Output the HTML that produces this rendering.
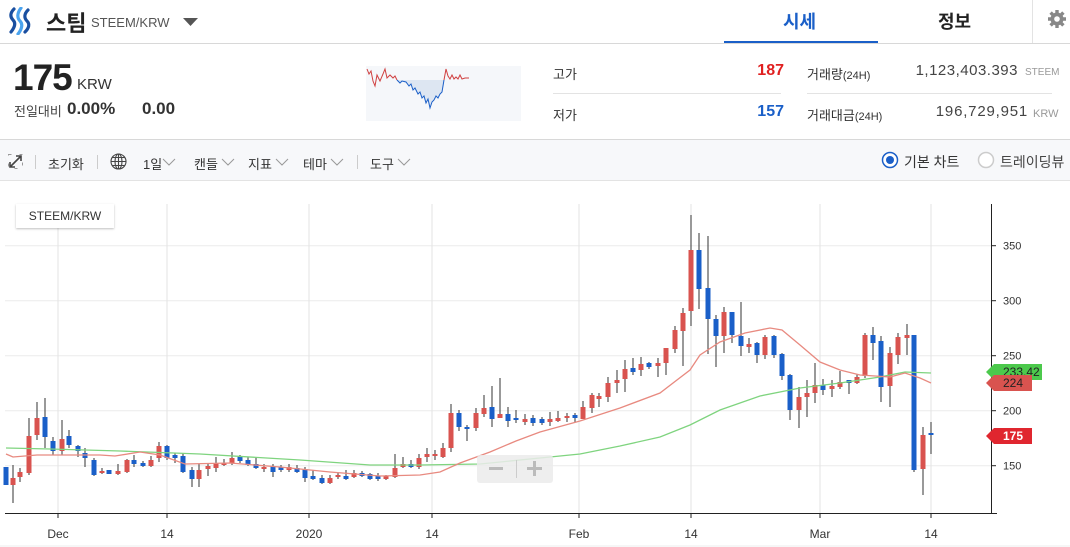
<!DOCTYPE html>
<html><head><meta charset="utf-8">
<style>
*{margin:0;padding:0;box-sizing:border-box}
body{width:1070px;height:547px;overflow:hidden;background:#fff;font-family:"Liberation Sans","Noto Sans CJK KR",sans-serif;color:#222;position:relative}
.a{position:absolute;white-space:nowrap}
</style></head><body>
<!-- header -->
<svg class="a" style="left:8px;top:7px" width="26" height="28" viewBox="0 0 26 28">
<path d="M6 2 C2 6,2 10,5 13 C8 16,7 20,3 25" stroke="#1a4fa0" stroke-width="3.2" fill="none" stroke-linecap="round"/>
<path d="M13 1 C9 6,9 11,12 14 C15 17,14 22,10 27" stroke="#4aa3ee" stroke-width="3.2" fill="none" stroke-linecap="round"/>
<path d="M20 3 C16 7,16 11,19 14 C22 17,21 21,17 25" stroke="#1a4fa0" stroke-width="3.2" fill="none" stroke-linecap="round"/>
</svg>
<div class="a" style="left:46px;top:6px;font-size:22px;font-weight:bold;color:#222">스팀</div>
<div class="a" style="left:91px;top:15px;font-size:13px;color:#555">STEEM/KRW</div>
<svg class="a" style="left:183px;top:18px" width="15" height="9"><path d="M0 0H15L7.5 8Z" fill="#555"/></svg>
<div class="a" style="left:783px;top:8px;font-size:18px;font-weight:bold;color:#1a5fc8">시세</div>
<div class="a" style="left:724px;top:41px;width:154px;height:3px;background:#1a5fc8"></div>
<div class="a" style="left:938px;top:8px;font-size:18px;font-weight:bold;color:#222">정보</div>
<div class="a" style="left:1032px;top:0;width:1px;height:43px;background:#e3e3e3"></div>
<svg class="a" style="left:1047px;top:9px" width="20" height="20" viewBox="0 0 20 20"><g fill="#888"><circle cx="10" cy="10" r="6.5"/><g stroke="#888" stroke-width="3.4"><path d="M10 1v18M1 10h18M3.6 3.6l12.8 12.8M16.4 3.6L3.6 16.4"/></g></g><circle cx="10" cy="10" r="2.8" fill="#fff"/></svg>
<div class="a" style="left:0;top:43px;width:1070px;height:1px;background:#d8d8d8"></div>
<!-- info -->
<div class="a" style="left:13px;top:57px;font-size:37px;color:#222;letter-spacing:-1px;font-weight:bold">175</div>
<div class="a" style="left:77px;top:76px;font-size:15px;color:#333">KRW</div>
<div class="a" style="left:14px;top:101px;font-size:13px;color:#444">전일대비</div>
<div class="a" style="left:67px;top:99px;font-size:17px;font-weight:bold;color:#333">0.00%</div>
<div class="a" style="left:142px;top:99px;font-size:17px;font-weight:bold;color:#333">0.00</div>
<svg class="a" style="left:366px;top:66px" width="155" height="55">
<rect width="155" height="55" fill="#f5f7fa"/>
<path d="M31 14L34 17L36 15L40 16L43 20L45 18L47 24L49 22L52 28L54 26L56 32L58 30L60 37L62 33L64 42L66 36L68 34L70 30L72 32L74 28L76 26L78 14Z" fill="#dde6f2"/>
<path d="M1 3L3 8L5 5L7 15L9 20L11 9L14 15L17 8L19 3L21 12L24 9L27 12L29 10L31 14" stroke="#d04040" stroke-width="1" fill="none"/>
<path d="M31 14L34 17L36 15L40 16L43 20L45 18L47 24L49 22L52 28L54 26L56 32L58 30L60 37L62 33L64 42L66 36L68 34L70 30L72 32L74 28L76 26L78 14" stroke="#1a5fc8" stroke-width="1" fill="none"/>
<path d="M78 14L80 3L82 10L84 13L86 9L88 13L90 11L92 13L94 9L96 13L99 12L103 12" stroke="#d04040" stroke-width="1" fill="none"/>
</svg>
<div class="a" style="left:553px;top:64px;font-size:13px;color:#333">고가</div>
<div class="a" style="left:740px;top:62px;width:44px;text-align:right;font-size:16px;font-weight:bold;color:#e02020">187</div>
<div class="a" style="left:553px;top:93px;width:228px;height:1px;background:#e3e3e3"></div>
<div class="a" style="left:553px;top:105px;font-size:13px;color:#333">저가</div>
<div class="a" style="left:740px;top:103px;width:44px;text-align:right;font-size:16px;font-weight:bold;color:#1a5fc8">157</div>
<div class="a" style="left:807px;top:64px;font-size:13px;color:#333">거래량<span style="font-size:11px">(24H)</span></div>
<div class="a" style="left:880px;top:62px;width:138px;text-align:right;font-size:15px;color:#444;letter-spacing:0.5px">1,123,403.393</div>
<div class="a" style="left:1025px;top:67px;font-size:10px;color:#999">STEEM</div>
<div class="a" style="left:807px;top:93px;width:245px;height:1px;background:#e3e3e3"></div>
<div class="a" style="left:807px;top:105px;font-size:13px;color:#333">거래대금<span style="font-size:11px">(24H)</span></div>
<div class="a" style="left:880px;top:103px;width:148px;text-align:right;font-size:15px;color:#444;letter-spacing:0.8px">196,729,951</div>
<div class="a" style="left:1033px;top:108px;font-size:11px;color:#999">KRW</div>
<div class="a" style="left:0;top:139px;width:1070px;height:1px;background:#d8d8d8"></div>
<!-- toolbar -->
<div class="a" style="left:0;top:140px;width:1070px;height:41px;background:#f7f8fa;border-bottom:1px solid #e3e3e3"></div>
<svg class="a" style="left:8px;top:154px" width="15" height="15" viewBox="0 0 15 15"><rect x=".5" y=".5" width="14" height="14" fill="none" stroke="#999" stroke-dasharray="3 8"/><path d="M2 13L13 2M8 2h5v5M2 8v5h5" stroke="#444" stroke-width="1.6" fill="none"/></svg>
<div class="a" style="left:35px;top:155px;width:1px;height:14px;background:#ccc"></div>
<div class="a" style="left:48px;top:154px;font-size:13px;color:#333">초기화</div>
<div class="a" style="left:97px;top:155px;width:1px;height:14px;background:#ccc"></div>
<svg class="a" style="left:110px;top:153px" width="17" height="17" viewBox="0 0 17 17"><g fill="none" stroke="#444" stroke-width="1.1"><circle cx="8.5" cy="8.5" r="7.5"/><ellipse cx="8.5" cy="8.5" rx="3.5" ry="7.5"/><path d="M1 8.5h15M2.5 4.5h12M2.5 12.5h12M8.5 1v15"/></g></svg>
<div class="a" style="left:143px;top:154px;font-size:13px;color:#333">1일</div>
<div class="a" style="left:194px;top:154px;font-size:13px;color:#333">캔들</div>
<div class="a" style="left:248px;top:154px;font-size:13px;color:#333">지표</div>
<div class="a" style="left:303px;top:154px;font-size:13px;color:#333">테마</div>
<div class="a" style="left:357px;top:155px;width:1px;height:14px;background:#ccc"></div>
<div class="a" style="left:370px;top:154px;font-size:13px;color:#333">도구</div>
<svg class="a" style="left:0;top:158px" width="420" height="10"><g fill="none" stroke="#999" stroke-width="1"><path d="M163 1l6 6 6-6M222 1l6 6 6-6M276 1l6 6 6-6M331 1l6 6 6-6M398 1l6 6 6-6"/></g></svg>
<svg class="a" style="left:881px;top:151px" width="18" height="18"><circle cx="9" cy="9" r="7.5" fill="#fff" stroke="#1a5fc8" stroke-width="1.5"/><circle cx="9" cy="9" r="4" fill="#1a5fc8"/></svg>
<div class="a" style="left:904px;top:152px;font-size:14px;color:#333">기본 차트</div>
<svg class="a" style="left:977px;top:151px" width="18" height="18"><circle cx="9" cy="9" r="7.5" fill="#fff" stroke="#ccc" stroke-width="1.5"/></svg>
<div class="a" style="left:1000px;top:152px;font-size:14px;color:#444">트레이딩뷰</div>
<!-- chart -->
<svg id="ch" class="a" style="left:0;top:0" width="1070" height="547"></svg>
<div class="a" style="left:16px;top:204px;width:98px;height:24px;background:#fff;box-shadow:0 1px 2px rgba(0,0,0,.25);font-size:12px;color:#333;text-align:center;line-height:24px">STEEM/KRW</div>
<div class="a" style="left:477px;top:455px;width:76px;height:28px;background:rgba(235,235,235,.85);border-radius:3px"></div>
<div class="a" style="left:489px;top:467px;width:14px;height:3px;background:#bbb"></div>
<div class="a" style="left:516px;top:460px;width:1px;height:18px;background:#ccc"></div>
<div class="a" style="left:527px;top:467px;width:15px;height:3px;background:#bbb"></div>
<div class="a" style="left:533px;top:461px;width:3px;height:15px;background:#bbb"></div>
<script>
var s='';
function L(x1,y1,x2,y2,c,w){s+='<line x1="'+x1+'" y1="'+y1+'" x2="'+x2+'" y2="'+y2+'" stroke="'+c+'" stroke-width="'+(w||1)+'"/>';}
[245.7,300.7,355.7,410.7,465.7].forEach(function(y){L(5,y,991,y,'#ebebeb');});
[58,167,309,432,579,691,820,931].forEach(function(x){L(x,204,x,513,'#e3e3e3');});
L(5,513.5,997,513.5,'#222');L(991.5,204,991.5,513,'#222');
[['350',245.7],['300',300.7],['250',355.7],['200',410.7],['150',465.7]].forEach(function(t){L(991,t[1],996,t[1],'#222');s+='<text x="1003" y="'+(t[1]+4)+'" font-size="11" fill="#333" font-family="Liberation Sans">'+t[0]+'</text>';});
[['Dec',58],['14',167],['2020',309],['14',432],['Feb',579],['14',691],['Mar',820],['14',931]].forEach(function(t){L(t[1],513,t[1],518,'#222');s+='<text x="'+t[1]+'" y="538" font-size="12" fill="#333" text-anchor="middle" font-family="Liberation Sans">'+t[0]+'</text>';});
L(0,546,1070,546,'#eee');
var R='#d9534f',B='#1a5fc8';
var c=[[6,467,485,467,485,B],[13,478,485,465,503,R],[20,472,477,468,482,R],[29,436,473,418,475,R],[37,418,435,402,440,R],[45,417,437,398,448,B],[53,441,451,437,455,B],[62,439,451,420,455,R],[69,436,445,430,448,B],[78,446,451,445,457,B],[85,453,458,448,467,B],[94,460,475,458,476,B],[102,471,472,468,474,R],[109,470,474,470,474,B],[118,471,474,464,475,R],[127,460,472,459,473,R],[134,460,464,455,467,B],[143,463,466,461,467,B],[151,460,466,456,467,R],[159,446,458,442,462,R],[167,446,458,445,460,B],[175,455,458,453,463,B],[183,456,472,453,473,B],[192,470,479,467,487,B],[199,470,479,464,487,R],[208,466,469,463,476,R],[216,463,468,457,472,R],[224,463,465,459,466,R],[232,458,463,452,465,R],[240,457,461,455,463,B],[248,460,465,457,466,B],[256,464,468,457,469,B],[264,467,469,464,472,R],[273,466,472,464,477,B],[281,467,470,465,472,B],[289,467,470,464,472,R],[297,468,472,465,473,B],[305,469,478,467,482,B],[313,476,479,470,480,B],[322,478,483,475,484,B],[330,478,483,475,484,R],[338,475,477,473,479,R],[346,476,479,470,480,B],[354,473,477,470,478,R],[362,473,476,471,477,B],[370,474,479,473,480,B],[378,476,479,473,481,B],[386,476,479,475,480,R],[395,468,477,454,478,R],[403,464,467,457,468,R],[411,464,467,460,468,B],[419,458,467,454,469,R],[427,454,457,448,462,R],[435,454,456,450,460,R],[443,448,457,443,458,R],[451,413,448,404,452,R],[459,413,427,410,431,B],[467,427,429,425,441,B],[476,413,428,408,431,R],[484,408,414,395,417,R],[492,407,419,386,427,B],[500,414,418,378,418,R],[508,414,421,407,427,B],[516,418,420,410,423,B],[525,419,422,414,425,R],[533,418,423,415,426,B],[542,419,423,417,425,B],[550,419,422,412,426,R],[558,418,421,411,422,R],[567,416,418,413,422,R],[575,415,418,413,422,B],[583,407,419,401,419,R],[592,395,408,393,413,R],[599,396,399,393,407,R],[608,383,397,377,402,R],[617,380,383,370,393,R],[625,369,379,360,392,R],[633,368,372,358,375,B],[641,364,370,357,376,R],[649,363,367,362,369,B],[658,363,366,358,377,R],[666,348,363,348,375,R],[675,330,349,326,353,R],[683,313,331,308,366,R],[691,250,311,215,326,R],[699,250,289,233,309,B],[708,288,319,236,354,B],[716,319,336,315,367,B],[724,312,336,307,353,R],[732,312,335,312,343,B],[741,336,346,302,356,B],[749,344,347,338,353,R],[757,343,355,342,363,B],[765,337,355,335,359,R],[774,336,355,335,358,B],[782,354,376,353,380,B],[790,375,410,374,420,B],[799,397,410,387,428,R],[807,393,397,380,417,R],[815,385,393,363,403,R],[823,385,390,379,395,B],[832,386,389,380,397,R],[840,382,387,371,389,R],[849,380,383,380,394,B],[857,377,383,374,384,R],[865,335,376,333,378,R],[873,335,343,327,360,B],[881,341,387,336,402,B],[890,353,386,347,407,R],[898,337,355,333,364,R],[907,335,338,324,355,R],[914,335,470,335,472,B],[923,435,469,427,495,R],[931,433,435,422,454,B]];
c.forEach(function(k){L(k[0],k[3],k[0],k[4],'#333');s+='<rect x="'+(k[0]-2.5)+'" y="'+k[1]+'" width="5" height="'+Math.max(2,k[2]-k[1])+'" fill="'+k[5]+'"/>';});
var rm=[[6,454],[13,457],[37,455],[100,455],[115,456],[140,452],[160,455],[185,464],[230,463],[280,467],[330,472],[380,476],[420,475],[440,472],[460,463],[490,452],[516,441],[540,432],[580,421],[620,408],[660,393],[690,370],[700,355],[720,342],[745,333],[770,328],[782,330],[800,345],[820,362],[840,370],[860,375],[890,377],[905,373],[920,378],[931,383]];
var gm=[[6,448],[50,449],[120,451],[200,454],[300,460],[370,465],[420,465],[480,464],[540,458],[580,454],[620,446],[660,437],[690,425],[720,410],[760,396],[800,388],[840,383],[880,377],[905,372],[931,373]];
function P(a,col){s+='<polyline fill="none" stroke="'+col+'" stroke-width="1.3" points="'+a.map(function(p){return p.join(',')}).join(' ')+'"/>';}
P(gm,'#7fd47f');P(rm,'#e88a80');
function T(y,col,txt,bold){s+='<path d="M986 '+y+'L994 '+(y-8)+'H1032V'+(y+8)+'H994Z" fill="'+col+'"/><text x="1003" y="'+(y+4)+'" font-size="12" fill="'+(bold?'#fff':'#222')+'" font-weight="'+(bold?'bold':'normal')+'" font-family="Liberation Sans">'+txt+'</text>';}
s+='<path d="M986 372L994 364H1042V380H994Z" fill="#4cc94c"/><text x="1003" y="376" font-size="12" fill="#222" font-family="Liberation Sans">233.42</text>';
T(383,'#d9534f','224',false);
T(436,'#e0262f','175',true);
document.getElementById('ch').innerHTML=s;
</script>
</body></html>
